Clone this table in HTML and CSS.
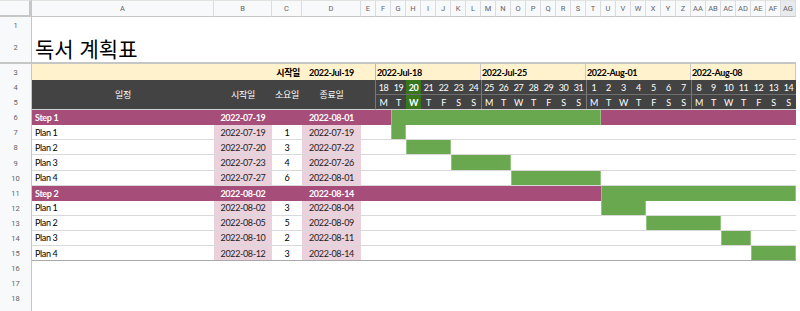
FILE: index.html
```html
<!DOCTYPE html>
<html lang="ko">
<head>
<meta charset="utf-8">
<title>독서 계획표</title>
<link rel="stylesheet" href="styles.css">
</head>
<body>
<div class="sheet">
  <!-- column headers -->
  <div class="corner"></div>
  <div class="ch">A</div><div class="ch">B</div><div class="ch">C</div><div class="ch">D</div><div class="ch">E</div>
  <div class="ch-days">
    <div class="ch">F</div><div class="ch">G</div><div class="ch">H</div><div class="ch">I</div><div class="ch">J</div><div class="ch">K</div><div class="ch">L</div>
    <div class="ch">M</div><div class="ch">N</div><div class="ch">O</div><div class="ch">P</div><div class="ch">Q</div><div class="ch">R</div><div class="ch">S</div>
    <div class="ch">T</div><div class="ch">U</div><div class="ch">V</div><div class="ch">W</div><div class="ch">X</div><div class="ch">Y</div><div class="ch">Z</div>
    <div class="ch">AA</div><div class="ch">AB</div><div class="ch">AC</div><div class="ch">AD</div><div class="ch">AE</div><div class="ch">AF</div><div class="ch ch-sel">AG</div>
  </div>

  <!-- row 1 -->
  <div class="rn">1</div><div class="blank"></div>
  <!-- row 2 -->
  <div class="rn freeze">2</div><div class="title freeze">독서 계획표</div>
  <!-- row 3 -->
  <div class="rn">3</div>
  <div class="y y-ab"></div>
  <div class="y y-label">시작일</div>
  <div class="y y-date">2022-Jul-19</div>
  <div class="y y-e"></div>
  <div class="weeks">
    <div class="week">2022-Jul-18</div>
    <div class="week">2022-Jul-25</div>
    <div class="week">2022-Aug-01</div>
    <div class="week">2022-Aug-08</div>
  </div>
  <!-- rows 4-5 -->
  <div class="rn">4</div>
  <div class="hd">일정</div>
  <div class="hd">시작일</div>
  <div class="hd">소요일</div>
  <div class="hd">종료일</div>
  <div class="hd hd-e"></div>
  <div class="days nums">
    <div class="d wk">18</div><div class="d">19</div><div class="d today">20</div><div class="d">21</div><div class="d">22</div><div class="d">23</div><div class="d">24</div>
    <div class="d wk">25</div><div class="d">26</div><div class="d">27</div><div class="d">28</div><div class="d">29</div><div class="d">30</div><div class="d">31</div>
    <div class="d wk">1</div><div class="d">2</div><div class="d">3</div><div class="d">4</div><div class="d">5</div><div class="d">6</div><div class="d">7</div>
    <div class="d wk">8</div><div class="d">9</div><div class="d">10</div><div class="d">11</div><div class="d">12</div><div class="d">13</div><div class="d">14</div>
  </div>
  <div class="rn">5</div>
  <div class="days dows">
    <div class="d wk">M</div><div class="d">T</div><div class="d today">W</div><div class="d">T</div><div class="d">F</div><div class="d">S</div><div class="d">S</div>
    <div class="d wk">M</div><div class="d">T</div><div class="d">W</div><div class="d">T</div><div class="d">F</div><div class="d">S</div><div class="d">S</div>
    <div class="d wk">M</div><div class="d">T</div><div class="d">W</div><div class="d">T</div><div class="d">F</div><div class="d">S</div><div class="d">S</div>
    <div class="d wk">M</div><div class="d">T</div><div class="d">W</div><div class="d">T</div><div class="d">F</div><div class="d">S</div><div class="d">S</div>
  </div>

  <!-- row 6: Step 1 -->
  <div class="rn">6</div>
  <div class="step name">Step 1</div>
  <div class="step c">2022-07-19</div>
  <div class="step c"></div>
  <div class="step c">2022-08-01</div>
  <div class="step"></div>
  <div class="gantt gantt-step"><div class="bar" style="grid-column: 2 / span 14"></div></div>

  <!-- row 7 -->
  <div class="rn">7</div>
  <div class="plan name">Plan 1</div>
  <div class="plan pink c">2022-07-19</div>
  <div class="plan c">1</div>
  <div class="plan pink c">2022-07-19</div>
  <div class="plan"></div>
  <div class="gantt plan"><div class="bar" style="grid-column: 2 / span 1"></div></div>

  <!-- row 8 -->
  <div class="rn">8</div>
  <div class="plan name">Plan 2</div>
  <div class="plan pink c">2022-07-20</div>
  <div class="plan c">3</div>
  <div class="plan pink c">2022-07-22</div>
  <div class="plan"></div>
  <div class="gantt plan"><div class="bar" style="grid-column: 3 / span 3"></div></div>

  <!-- row 9 -->
  <div class="rn">9</div>
  <div class="plan name">Plan 3</div>
  <div class="plan pink c">2022-07-23</div>
  <div class="plan c">4</div>
  <div class="plan pink c">2022-07-26</div>
  <div class="plan"></div>
  <div class="gantt plan"><div class="bar" style="grid-column: 6 / span 4"></div></div>

  <!-- row 10 -->
  <div class="rn">10</div>
  <div class="plan name">Plan 4</div>
  <div class="plan pink c">2022-07-27</div>
  <div class="plan c">6</div>
  <div class="plan pink c">2022-08-01</div>
  <div class="plan"></div>
  <div class="gantt plan"><div class="bar" style="grid-column: 10 / span 6"></div></div>

  <!-- row 11: Step 2 -->
  <div class="rn">11</div>
  <div class="step name">Step 2</div>
  <div class="step c">2022-08-02</div>
  <div class="step c"></div>
  <div class="step c">2022-08-14</div>
  <div class="step"></div>
  <div class="gantt gantt-step"><div class="bar" style="grid-column: 16 / span 13"></div></div>

  <!-- row 12 -->
  <div class="rn">12</div>
  <div class="plan name">Plan 1</div>
  <div class="plan pink c">2022-08-02</div>
  <div class="plan c">3</div>
  <div class="plan pink c">2022-08-04</div>
  <div class="plan"></div>
  <div class="gantt plan"><div class="bar" style="grid-column: 16 / span 3"></div></div>

  <!-- row 13 -->
  <div class="rn">13</div>
  <div class="plan name">Plan 2</div>
  <div class="plan pink c">2022-08-05</div>
  <div class="plan c">5</div>
  <div class="plan pink c">2022-08-09</div>
  <div class="plan"></div>
  <div class="gantt plan"><div class="bar" style="grid-column: 19 / span 5"></div></div>

  <!-- row 14 -->
  <div class="rn">14</div>
  <div class="plan name">Plan 3</div>
  <div class="plan pink c">2022-08-10</div>
  <div class="plan c">2</div>
  <div class="plan pink c">2022-08-11</div>
  <div class="plan"></div>
  <div class="gantt plan"><div class="bar" style="grid-column: 24 / span 2"></div></div>

  <!-- row 15 -->
  <div class="rn">15</div>
  <div class="plan last name">Plan 4</div>
  <div class="plan last pink c">2022-08-12</div>
  <div class="plan last c">3</div>
  <div class="plan last pink c">2022-08-14</div>
  <div class="plan last"></div>
  <div class="gantt plan last"><div class="bar" style="grid-column: 26 / span 3"></div></div>

  <!-- empty rows -->
  <div class="rn">16</div><div class="blank"></div>
  <div class="rn">17</div><div class="blank"></div>
  <div class="rn">18</div><div class="blank"></div>
  <div class="rn"></div><div class="blank"></div>
</div>
</body>
</html>
```

FILE: styles.css
```css
* { box-sizing: border-box; }

html, body {
  margin: 0;
  padding: 0;
  background: #ffffff;
  overflow: hidden;
}

.sheet {
  display: grid;
  grid-template-columns: 32px 182px 58px 30px 59px 15px 420px;
  grid-template-rows: 17px 16px 31px 16px repeat(16, 15.1px);
  width: 796px;
  font-family: "Lato", "Noto Sans CJK KR", sans-serif;
  font-size: 9px;
  letter-spacing: -0.35px;
  color: #000;
}

/* column headers */
.corner {
  background: #f8f9fa;
  border-top: 1px solid #e1e3e1;
  border-right: 3px solid #c4c7c5;
  border-bottom: 2px solid #c4c7c5;
}

.ch {
  display: flex;
  align-items: center;
  justify-content: center;
  background: #f8f9fa;
  border-top: 1px solid #e1e3e1;
  border-right: 1px solid #dadce0;
  border-bottom: 1px solid #c4c7c5;
  color: #5f6368;
  font-family: "Roboto", "Liberation Sans", sans-serif;
  font-size: 7.5px;
  letter-spacing: 0;
}

.ch-sel { background: #e8eaed; }

.ch-days {
  display: grid;
  grid-template-columns: repeat(28, 15px);
}

/* row numbers */
.rn {
  display: flex;
  align-items: center;
  justify-content: center;
  background: #f8f9fa;
  border-right: 1px solid #c4c7c5;
  color: #5f6368;
  font-family: "Roboto", "Liberation Sans", sans-serif;
  font-size: 7.5px;
  letter-spacing: 0;
}

.blank { grid-column: span 6; }

.title {
  grid-column: span 6;
  display: flex;
  align-items: center;
  padding-left: 3px;
  font-family: "Noto Sans CJK KR", sans-serif;
  font-size: 21px;
  letter-spacing: 0;
}

.freeze { border-bottom: 2px solid #c4c7c5; }

/* row 3 */
.y {
  display: flex;
  align-items: center;
  background: #fff2cc;
  font-weight: 700;
}
.y-ab { grid-column: span 2; }
.y-label { justify-content: flex-end; padding-right: 2px; }
.y-date { justify-content: center; }
.y-e { border-right: 1px solid #b7b7b7; }

.weeks {
  display: grid;
  grid-template-columns: repeat(4, 105px);
  background: #fff2cc;
}
.week {
  display: flex;
  align-items: center;
  padding-left: 1px;
  font-weight: 700;
  border-right: 1px solid #c9c9c9;
}

/* rows 4-5 header */
.hd {
  grid-row: span 2;
  display: flex;
  align-items: center;
  justify-content: center;
  background: #434343;
  color: #fff;
  border-bottom: 1px solid #d0d0d0;
}
.hd-e { border-right: 1px solid #777; }

.days {
  display: grid;
  grid-template-columns: repeat(28, 15px);
  background: #434343;
  color: #fff;
}
.nums { border-bottom: 1px solid #6f6f6f; }
.dows { border-bottom: 1px solid #d0d0d0; }

.d {
  display: flex;
  align-items: center;
  justify-content: center;
}
.d.wk { border-left: 1px solid #7a7a7a; }
.d.wk:first-child { border-left: none; }
.today { background: #38761d; font-weight: 700; }

/* data rows */
.step {
  display: flex;
  align-items: center;
  background: #a64d79;
  color: #fff;
  font-weight: 700;
}

.plan {
  display: flex;
  align-items: center;
  border-bottom: 1px solid #d9d9d9;
  color: #000;
}
.plan.last { border-bottom: 1px solid #a9a9a9; }

.pink { background: #ead1dc; color: #222; }

.name { padding-left: 3px; }
.c { justify-content: center; }

.gantt {
  display: grid;
  grid-template-columns: repeat(28, 15px);
  align-items: stretch;
}
.gantt-step { background: #a64d79; }

.bar {
  grid-row: 1;
  background: #6aa84f;
  box-shadow: inset 1px 0 0 #93c47d, inset -1px 0 0 #93c47d;
}
```
